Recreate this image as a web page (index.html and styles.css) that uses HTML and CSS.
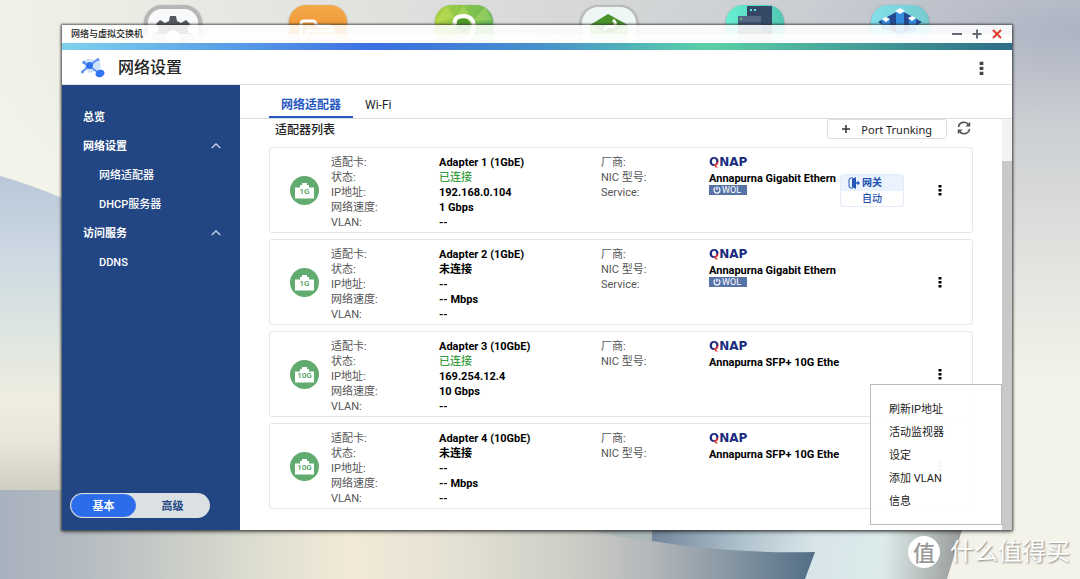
FILE: index.html
```html
<!DOCTYPE html>
<html lang="zh-CN">
<head>
<meta charset="utf-8">
<title>网络与虚拟交换机</title>
<meta name="viewport" content="width=device-width, initial-scale=1">
<link rel="stylesheet" href="styles.css">
</head>
<body class="desktop">
<svg class="wallpaper" viewBox="0 0 1080 579" preserveAspectRatio="none" aria-hidden="true">
  <defs>
    <radialGradient id="sky" gradientUnits="userSpaceOnUse" cx="0" cy="0" r="1" gradientTransform="translate(1080 30) scale(1120 350)">
      <stop offset="0" stop-color="#adb3c3"/><stop offset=".25" stop-color="#cacdd2"/><stop offset=".6" stop-color="#dfe0dd"/><stop offset="1" stop-color="#f3f3ea"/>
    </radialGradient>
    <linearGradient id="hill" x1="0" y1="0" x2="0" y2="1">
      <stop offset="0" stop-color="#b9c7d8"/><stop offset=".25" stop-color="#ccd9e3"/><stop offset=".48" stop-color="#dde5e1"/><stop offset=".72" stop-color="#efede0"/><stop offset=".85" stop-color="#e8e6da"/><stop offset="1" stop-color="#d0cfc4"/>
    </linearGradient>
    <linearGradient id="floor" gradientUnits="userSpaceOnUse" x1="0" y1="0" x2="815" y2="0">
      <stop offset="0" stop-color="#a8b1be"/><stop offset=".1" stop-color="#b4bbc1"/><stop offset=".22" stop-color="#cbcec8"/><stop offset=".34" stop-color="#e2e1d2"/><stop offset=".43" stop-color="#f3ead8"/><stop offset=".56" stop-color="#e4e1d4"/><stop offset=".7" stop-color="#cdcec6"/><stop offset=".8" stop-color="#b3b7ba"/><stop offset=".92" stop-color="#7b8e9d"/><stop offset="1" stop-color="#526d85"/>
    </linearGradient>
    <linearGradient id="blade" gradientUnits="userSpaceOnUse" x1="652" y1="535" x2="960" y2="560">
      <stop offset="0" stop-color="#72859a"/><stop offset=".3" stop-color="#b1c3ce"/><stop offset=".52" stop-color="#d7e5ea"/><stop offset=".75" stop-color="#dcebea"/><stop offset="1" stop-color="#999c9b"/>
    </linearGradient>
  </defs>
  <rect width="1080" height="579" fill="url(#sky)"/>
  <path d="M0 176Q32 185 62 198L140 232V490H0Z" fill="url(#hill)"/>
  <path d="M0 490H815V579H0Z" fill="url(#floor)"/>
  <path d="M588 530H652V542Q620 537 588 530Z" fill="#adb9b9"/>
  <path d="M652 520H965L947 579H805L815 552Q730 554 652 541Z" fill="url(#blade)"/>
</svg>

<nav class="shortcuts" aria-label="桌面">
  <svg class="shortcut" viewBox="0 0 58 58"><rect x="2" y="2" width="54" height="54" rx="16" fill="#f8f9fa" stroke="#b6b6b6" stroke-width="4"/><path d="M26 11h6l1 5 4 2 5-3 4 4-3 5 2 4 5 1v6l-5 1-2 4 3 5-4 4-5-3-4 2-1 5h-6l-1-5-4-2-5 3-4-4 3-5-2-4-5-1v-6l5-1 2-4-3-5 4-4 5 3 4-2z" fill="#555860"/><circle cx="29" cy="32" r="7" fill="#f8f9fa"/></svg>
  <svg class="shortcut" viewBox="0 0 58 58"><defs><linearGradient id="or" x2="0" y2="1"><stop stop-color="#f2aa4b"/><stop offset="1" stop-color="#ef7d1b"/></linearGradient></defs><rect width="58" height="58" rx="17" fill="url(#or)"/><path d="M12 42V19q0-3 3-3h9q2 0 3 3l1 2h12q3 0 3 3v4M12 42l7-16h26" fill="none" stroke="#fff" stroke-width="3"/></svg>
  <svg class="shortcut" viewBox="0 0 58 58"><defs><linearGradient id="gr"><stop stop-color="#acd23c"/><stop offset="1" stop-color="#68b95a"/></linearGradient></defs><rect width="58" height="58" rx="17" fill="url(#gr)"/><path d="M0 17 12 1l8 12zM29 0 20 13l17 3zM38 16 50 2l7 13z" fill="#dceb70" opacity=".3"/><circle cx="28" cy="20" r="7" fill="#4d9828"/><path d="M20 20Q18 11 29 11q12 1 9 14-2 8-9 11" fill="none" stroke="#fff" stroke-width="4"/></svg>
  <svg class="shortcut" viewBox="0 0 58 58"><rect x="1" y="1" width="56" height="56" rx="17" fill="#eef6f6" stroke="#bbb" stroke-width="2"/><path d="M10 20 28 9l20 11-19 9z" fill="#4a932c"/><path d="M10 20v19l19 11V29zM48 20v19L29 50V29z" fill="#8fbf50"/><path d="M24 25q3-5 9-3 5-3 0-7" fill="none" stroke="#f3f8f3" stroke-width="3"/></svg>
  <svg class="shortcut" viewBox="0 0 58 58"><defs><linearGradient id="te"><stop stop-color="#67efd2"/><stop offset="1" stop-color="#50c7b3"/></linearGradient></defs><rect width="58" height="58" rx="17" fill="url(#te)"/><path d="M21 1h25v50H21z" fill="#354967"/><path d="M12 11h23v34H12z" fill="#536684"/><path d="M12 18h23M21 9h25" stroke="#304260"/><circle cx="15" cy="14" r="1" fill="#70e066"/><path d="M24 5h2m2 0h2" stroke="#5de6ef" stroke-width="2"/></svg>
  <svg class="shortcut" viewBox="0 0 58 58"><defs><linearGradient id="bl"><stop stop-color="#81dfe9"/><stop offset="1" stop-color="#75cbd0"/></linearGradient></defs><rect width="58" height="58" rx="17" fill="url(#bl)"/><path d="M7 17 29 5l22 12-22 14z" fill="#264893"/><path d="M25 6h8v26h-8zM11 15h8v10h-8zM38 14h7v12h-7z" fill="#348ddd"/><path d="m24 6 5-3 5 3-5 3zM11 14l4-2 4 2-4 3zM37 13l4-2 4 2-4 3z" fill="#fff"/></svg>
</nav>

<svg class="sprite" aria-hidden="true">
  <symbol id="port" viewBox="0 0 29 29"><circle cx="14.500" cy="14.500" r="14.500" fill="#61ab6e"/><path d="M5 22.500V11.500h5V9h2V7h5v2h2v2.500h5v11z" fill="#fff"/></symbol>
  <symbol id="dots" viewBox="0 0 4 12"><path d="M.5 1h3v2.500h-3zm0 4h3v2.500h-3zm0 4h3v2.500h-3z" fill="currentColor"/></symbol>
  <symbol id="power" viewBox="0 0 8 8"><path d="M2.400 1.500a3 3 0 1 0 3.200 0M4 .5v3.500" fill="none" stroke="#fff" stroke-width="1.200"/></symbol>
  <symbol id="up" viewBox="0 0 10 6"><path d="m.7 5 4.300-4 4.300 4" fill="none" stroke="#c5d2e7" stroke-width="1.300"/></symbol>
</svg>

<main class="window">
  <div class="titlebar">
    <span class="caption">网络与虚拟交换机</span>
    <button class="winbtn" aria-label="最小化"><svg viewBox="0 0 10 10"><path d="M0 5h10" stroke="#666a73" stroke-width="2"/></svg></button>
    <button class="winbtn" aria-label="最大化"><svg viewBox="0 0 10 10"><path d="M0.500 5h9M5 .5v9" stroke="#666a73" stroke-width="2"/></svg></button>
    <button class="winbtn" aria-label="关闭"><svg viewBox="0 0 10 10"><path d="m1 1 8 8M9 1 1 9" stroke="#e03c31" stroke-width="2"/></svg></button>
  </div>
  <div class="strip"></div>
  <header class="header">
    <svg class="applogo" viewBox="0 0 24 20" aria-hidden="true"><path d="m5 1 14 1 1 10-12 3-5-6z" fill="#cfe4fb"/><path d="M3 5 8 8 17 1M8 8l-7 6M8 8l10 7" fill="none" stroke="#5b90f5" stroke-width="1.700"/><circle cx="8.500" cy="7.500" r="3.500" fill="#3274f0"/><circle cx="3" cy="4.500" r="1.700" fill="#5b90f5"/><circle cx="17" cy="1.700" r="1.400" fill="#5b90f5"/><circle cx="1.500" cy="14" r="1.400" fill="#5b90f5"/><ellipse cx="19" cy="15.500" rx="4.600" ry="3.600" transform="rotate(-20 19 15.500)" fill="#3274f0"/></svg>
    <h1 class="apptitle">网络设置</h1>
    <button class="more more-app" aria-label="更多"><svg viewBox="0 0 4 12"><use href="#dots"/></svg></button>
  </header>
  <div class="body">
    <aside class="sidebar">
      <nav class="menu">
        <a class="item" href="#">总览</a>
        <a class="item" href="#">网络设置<svg class="chev"><use href="#up"/></svg></a>
        <a class="item sub" href="#">网络适配器</a>
        <a class="item sub" href="#">DHCP服务器</a>
        <a class="item" href="#">访问服务<svg class="chev"><use href="#up"/></svg></a>
        <a class="item sub" href="#">DDNS</a>
      </nav>
      <div class="mode"><button class="modebtn on" aria-pressed="true">基本</button><button class="modebtn" aria-pressed="false">高级</button></div>
    </aside>
    <section class="content">
      <div class="tabs" role="tablist">
        <button class="tab active" role="tab" aria-selected="true">网络适配器</button>
        <button class="tab" role="tab" aria-selected="false">Wi-Fi</button>
      </div>
      <div class="pane">
        <div class="list">
          <div class="toolbar">
            <h2 class="listtitle">适配器列表</h2>
            <button class="trunk"><svg class="plus" viewBox="0 0 8 8"><path d="M0 4h8M4 0v8" stroke="#333" stroke-width="1.500"/></svg>Port Trunking</button>
            <button class="refresh" aria-label="刷新"><svg viewBox="0 0 14 14"><path d="M1.500 6A5.500 5.500 0 0 1 11.500 3.700M12.500 8A5.500 5.500 0 0 1 2.500 10.300" fill="none" stroke="#555" stroke-width="1.700"/><path d="M13.200.8v4.700H8.500zM.8 13.200V8.500h4.700z" fill="#555"/></svg></button>
          </div>

          <article class="card">
            <div class="port"><svg class="portbg"><use href="#port"/></svg><span class="speed">1G</span></div>
            <dl class="info">
              <dt>适配卡:</dt><dd>Adapter 1 (1GbE)</dd>
              <dt>状态:</dt><dd class="ok">已连接</dd>
              <dt>IP地址:</dt><dd>192.168.0.104</dd>
              <dt>网络速度:</dt><dd>1 Gbps</dd>
              <dt>VLAN:</dt><dd>--</dd>
            </dl>
            <dl class="info nic">
              <dt>厂商:</dt><dd class="brand"><span class="q">Q</span>NAP</dd>
              <dt>NIC 型号:</dt><dd class="model">Annapurna Gigabit Ethern</dd>
              <dt>Service:</dt><dd class="wol"><svg class="power"><use href="#power"/></svg>WOL</dd>
            </dl>
            <div class="gateway">
              <div class="gwtop"><svg class="gwicon" viewBox="0 0 12 12"><path d="M5 1H3Q1 1 1 3v6q0 2 2 2h2" fill="none" stroke="#2456b8"/><path d="m4 2 4-2v12l-4-2z" fill="#2456b8"/><path d="M8 6h2" stroke="#2456b8" stroke-width="1.500"/><path d="m9.500 3.500 2.500 2.500-2.500 2.500z" fill="#2456b8"/></svg>网关</div>
              <div class="gwmode">自动</div>
            </div>
            <button class="more" aria-label="更多"><svg viewBox="0 0 4 12"><use href="#dots"/></svg></button>
          </article>

          <article class="card">
            <div class="port"><svg class="portbg"><use href="#port"/></svg><span class="speed">1G</span></div>
            <dl class="info">
              <dt>适配卡:</dt><dd>Adapter 2 (1GbE)</dd>
              <dt>状态:</dt><dd>未连接</dd>
              <dt>IP地址:</dt><dd>--</dd>
              <dt>网络速度:</dt><dd>-- Mbps</dd>
              <dt>VLAN:</dt><dd>--</dd>
            </dl>
            <dl class="info nic">
              <dt>厂商:</dt><dd class="brand"><span class="q">Q</span>NAP</dd>
              <dt>NIC 型号:</dt><dd class="model">Annapurna Gigabit Ethern</dd>
              <dt>Service:</dt><dd class="wol"><svg class="power"><use href="#power"/></svg>WOL</dd>
            </dl>
            <button class="more" aria-label="更多"><svg viewBox="0 0 4 12"><use href="#dots"/></svg></button>
          </article>

          <article class="card">
            <div class="port"><svg class="portbg"><use href="#port"/></svg><span class="speed">10G</span></div>
            <dl class="info">
              <dt>适配卡:</dt><dd>Adapter 3 (10GbE)</dd>
              <dt>状态:</dt><dd class="ok">已连接</dd>
              <dt>IP地址:</dt><dd>169.254.12.4</dd>
              <dt>网络速度:</dt><dd>10 Gbps</dd>
              <dt>VLAN:</dt><dd>--</dd>
            </dl>
            <dl class="info nic">
              <dt>厂商:</dt><dd class="brand"><span class="q">Q</span>NAP</dd>
              <dt>NIC 型号:</dt><dd class="model">Annapurna SFP+ 10G Ethe</dd>
            </dl>
            <button class="more" aria-label="更多"><svg viewBox="0 0 4 12"><use href="#dots"/></svg></button>
          </article>

          <article class="card">
            <div class="port"><svg class="portbg"><use href="#port"/></svg><span class="speed">10G</span></div>
            <dl class="info">
              <dt>适配卡:</dt><dd>Adapter 4 (10GbE)</dd>
              <dt>状态:</dt><dd>未连接</dd>
              <dt>IP地址:</dt><dd>--</dd>
              <dt>网络速度:</dt><dd>-- Mbps</dd>
              <dt>VLAN:</dt><dd>--</dd>
            </dl>
            <dl class="info nic">
              <dt>厂商:</dt><dd class="brand"><span class="q">Q</span>NAP</dd>
              <dt>NIC 型号:</dt><dd class="model">Annapurna SFP+ 10G Ethe</dd>
            </dl>
            <button class="more" aria-label="更多"><svg viewBox="0 0 4 12"><use href="#dots"/></svg></button>
          </article>
        </div>
        <div class="scrollbar"><div class="thumb"></div></div>
      </div>
      <div class="popup" role="menu">
        <button class="option" role="menuitem">刷新IP地址</button>
        <button class="option" role="menuitem">活动监视器</button>
        <button class="option" role="menuitem">设定</button>
        <button class="option" role="menuitem">添加 VLAN</button>
        <button class="option" role="menuitem">信息</button>
      </div>
    </section>
  </div>
</main>

<div class="watermark"><span class="seal">值</span><span>什么值得买</span></div>
</body>
</html>
```

FILE: styles.css
```css
* { box-sizing: border-box; }
body, h1, h2, dl, dd { margin: 0; }
button { margin: 0; padding: 0; border: 0; background: none; font: inherit; color: inherit; cursor: pointer; }
svg { display: block; }

.desktop {
  position: relative;
  height: 100vh;
  overflow: hidden;
  background: #f3f3ea;
  font-family: Roboto, "Noto Sans CJK SC", sans-serif;
  font-size: 11px;
  line-height: 15px;
  color: #222;
}
.wallpaper { position: absolute; inset: 0; width: 100%; height: 100%; }
.shortcuts { position: absolute; top: 5px; left: 0; right: 0; display: flex; justify-content: space-between; padding: 0 151px 0 144px; }
.shortcut { width: 58px; height: 58px; filter: drop-shadow(0 1px 1px rgba(0, 0, 0, .35)); }
.sprite { position: absolute; width: 0; height: 0; }

.window {
  position: absolute;
  inset: 25px 68px 49px 62px;
  display: flex;
  flex-direction: column;
  box-shadow: 0 0 2px 1px rgba(50, 50, 50, .75), 0 2px 4px rgba(0, 0, 0, .45);
}
.titlebar { display: flex; align-items: center; gap: 10px; height: 18px; padding: 0 10px 0 9px; background: linear-gradient(rgba(255, 255, 255, .88) 50%, rgba(255, 255, 255, .97) 50%); }
.caption { flex: 1; font-size: 9px; font-weight: 500; color: #222; }
.winbtn { width: 10px; height: 10px; }
.winbtn svg { width: 10px; height: 10px; }
.strip { height: 7px; background: linear-gradient(90deg, #7cd3ed, #3b6fe0 33%, #4690cc 50%, #5bd0a7 68%, #2d6c88); }
.header { display: flex; align-items: center; height: 35px; padding: 2px 19px 0; background: #fff; border-bottom: 1px solid #e0e0e0; }
.applogo { width: 24px; height: 20px; }
.apptitle { flex: 1; margin-left: 13px; font-size: 16px; font-weight: 500; line-height: 22px; }

.body { flex: 1; display: flex; min-height: 0; background: #fff; }
.sidebar { display: flex; flex-direction: column; justify-content: space-between; width: 178px; padding: 17px 0 12px; background: #224683; color: #fff; }
.menu { display: flex; flex-direction: column; }
.item { display: flex; align-items: center; justify-content: space-between; height: 29px; padding: 0 19px 0 21px; color: #fff; font-weight: 700; text-decoration: none; }
.sub { padding-left: 37px; font-weight: 500; }
.item { padding-top: 1px; }
.chev { width: 10px; height: 6px; }
.mode { display: flex; width: 140px; height: 25px; margin-left: 8px; padding: 1px; border-radius: 13px; background: #dbe0e5; }
.modebtn { flex: 1; padding-top: 2px; border-radius: 12px; font-weight: 700; color: #224683; }
.modebtn.on { flex: none; width: 65px; border: 1px solid #3a74e8; background: #2b6ceb; color: #fff; }

.content { position: relative; flex: 1; display: flex; flex-direction: column; min-width: 0; }
.tabs { display: flex; height: 34px; padding: 0 29px; border-bottom: 1px solid #dcdcdc; font-size: 12px; }
.tab { padding: 9px 12px 0; border-bottom: 2px solid transparent; }
.tab.active { border-color: #2858c0; color: #2858c0; font-weight: 700; }
.pane { flex: 1; display: flex; min-height: 0; }
.list { flex: 1; display: flex; flex-direction: column; gap: 6px; min-width: 0; padding: 0 29px; overflow: hidden; }
.toolbar { display: flex; align-items: flex-start; height: 22px; padding-left: 6px; }
.listtitle { flex: 1; font-size: 12px; font-weight: 500; line-height: 22px; }
.trunk { display: flex; align-items: center; gap: 11px; height: 20px; padding: 0 14px; border: 1px solid #ddd; border-radius: 3px; font-family: "Noto Sans", sans-serif; font-size: 11px; }
.plus { width: 8px; height: 8px; }
.refresh { width: 14px; height: 14px; margin: 2px 2px 0 10px; }
.refresh svg { width: 14px; height: 14px; }

.card {
  display: grid;
  grid-template-columns: 29px minmax(0, 282fr) minmax(0, 230fr) 73px 48px;
  align-items: center;
  flex: none;
  height: 86px;
  padding: 0 20px;
  border: 1px solid #e5e6ea;
  border-radius: 3px;
}
.port { position: relative; display: grid; place-items: center; width: 29px; height: 29px; }
.portbg { position: absolute; inset: 0; width: 29px; height: 29px; }
.speed { position: relative; padding-top: 3px; font-size: 8px; line-height: 10px; font-weight: 500; color: #4a9c58; }
.info { display: grid; grid-template-columns: 108px minmax(0, 1fr); grid-template-rows: 16px; grid-auto-rows: 15px; align-self: start; align-items: center; margin-left: 12px; padding-top: 6px; color: #555; }
.nic { margin-left: 0; }
.info dd { color: #000; font-weight: 700; white-space: nowrap; }
.info .ok { color: #3a9d3f; font-weight: 500; }
.info .brand { color: #1c2b80; font-family: "DejaVu Sans", sans-serif; font-size: 12px; }
.q { background: linear-gradient(135deg, #1c2b80 66%, #e23b35 66%); background-clip: text; color: transparent; }
.info .model { align-self: end; line-height: 13px; }
.info .wol { align-self: start; display: flex; align-items: center; gap: 1px; width: 38px; height: 10px; padding-left: 4px; background: #5673a8; color: #fff; font-size: 9px; line-height: 10px; font-weight: 400; }
.power { width: 8px; height: 8px; }
.gateway { margin-left: 9px; border: 1px solid #e3ecf8; border-radius: 3px; color: #2350ad; font-size: 10px; line-height: 15px; }
.gwtop { display: flex; align-items: center; gap: 2px; height: 16px; padding-left: 7px; background: #e9f2fd; font-weight: 700; }
.gwicon { width: 12px; height: 12px; }
.gwmode { height: 15px; padding-left: 21px; font-weight: 500; }
.more { display: grid; place-items: center; width: 24px; height: 24px; color: #000; }
.more svg { width: 4px; height: 12px; }
.card .more { grid-column: 5; justify-self: end; }
.more-app { color: #444; }
.more-app svg { width: 5px; height: 16px; }

.scrollbar { display: flex; flex-direction: column; width: 10px; padding-top: 42px; background: #f3f3f3; }
.thumb { flex: 1; background: #c9c9c9; }
.popup { position: absolute; right: 10px; bottom: 5px; display: flex; flex-direction: column; width: 132px; padding: 13px 0 11px 18px; border: 1px solid #bbb; background: rgba(255, 255, 255, .96); }
.option { height: 23px; text-align: left; }

.watermark { position: absolute; right: 10px; bottom: 9px; display: flex; align-items: center; gap: 10px; color: #fff; font-size: 24px; line-height: 36px; text-shadow: 1px 1px 2px rgba(0, 0, 0, .45); }
.seal { display: grid; place-items: center; width: 32px; height: 32px; border-radius: 50%; background: #fff; color: #999; font-size: 22px; font-weight: 500; text-shadow: none; }
```
